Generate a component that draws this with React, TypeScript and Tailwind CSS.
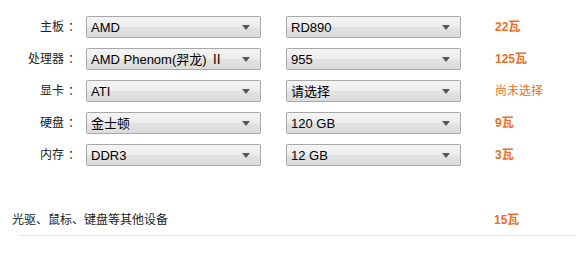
const rows = [
  { label: "主板", a: "AMD", b: "RD890", watt: "22瓦", bold: true },
  { label: "处理器", a: "AMD Phenom(羿龙) Ⅱ", b: "955", watt: "125瓦", bold: true },
  { label: "显卡", a: "ATI", b: "请选择", watt: "尚未选择", bold: false },
  { label: "硬盘", a: "金士顿", b: "120 GB", watt: "9瓦", bold: true },
  { label: "内存", a: "DDR3", b: "12 GB", watt: "3瓦", bold: true },
];

const cjk = "font-['Liberation_Sans','Noto_Sans_CJK_SC',sans-serif]";

function FakeSelect({ value }: { value: string }) {
  return (
    <div className="flex h-[22px] w-[175px] items-center justify-between rounded-[2px] border border-[#a8a8a8] bg-[linear-gradient(to_bottom,#f4f4f4_0%,#ededed_50%,#e2e2e2_50%,#dcdcdc_100%)] pl-[4px] pr-[10px] text-[13px] leading-none text-black">
      <span className="whitespace-nowrap">{value}</span>
      <svg width="8" height="5" viewBox="0 0 8 5">
        <path d="M0 0h8L4 5z" fill="#555" />
      </svg>
    </div>
  );
}

export default function App() {
  return (
    <div className={`w-[584px] h-[259px] bg-white pt-[16px] ${cjk}`}>
      {rows.map((r) => (
        <div key={r.label} className="mb-[10px] flex h-[22px] items-center">
          <div className="flex w-[76px] justify-end text-[12px] text-[#222]">
            <span>{r.label}</span>
            <span className="ml-[4px] w-[8px]">：</span>
          </div>
          <div className="ml-[10px]">
            <FakeSelect value={r.a} />
          </div>
          <div className="ml-[25px]">
            <FakeSelect value={r.b} />
          </div>
          <div className={`ml-[34px] text-[12px] text-[#e8702a] ${r.bold ? "font-bold" : ""}`}>{r.watt}</div>
        </div>
      ))}
      <div className="mt-[46px] flex h-[16px] items-center">
        <div className="w-[494px] pl-[12px] text-[12px] text-[#222]">光驱、鼠标、键盘等其他设备</div>
        <div className="text-[12px] font-bold text-[#e8702a]">15瓦</div>
      </div>
      <div className="ml-[19px] mt-[7px] h-px w-[557px] bg-[#e4e4ee]" />
    </div>
  );
}
